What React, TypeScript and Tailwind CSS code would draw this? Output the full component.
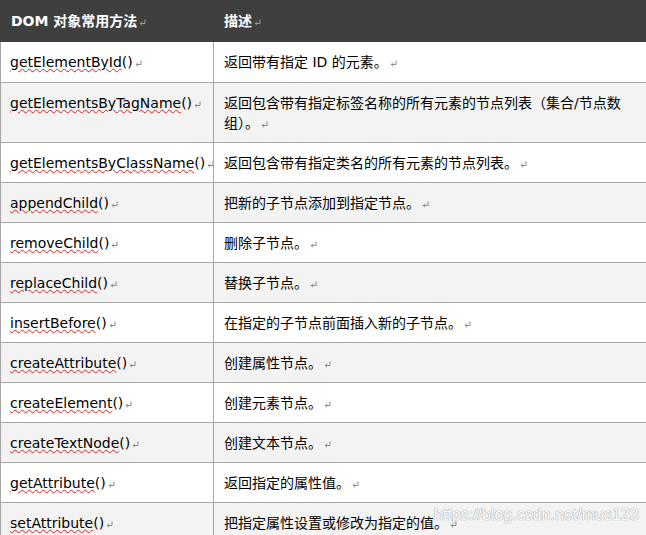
import React from "react";

const rows: [string, string][] = [
  ["getElementById", "返回带有指定 ID 的元素。"],
  ["getElementsByTagName", "返回包含带有指定标签名称的所有元素的节点列表（集合/节点数组）。"],
  ["getElementsByClassName", "返回包含带有指定类名的所有元素的节点列表。"],
  ["appendChild", "把新的子节点添加到指定节点。"],
  ["removeChild", "删除子节点。"],
  ["replaceChild", "替换子节点。"],
  ["insertBefore", "在指定的子节点前面插入新的子节点。"],
  ["createAttribute", "创建属性节点。"],
  ["createElement", "创建元素节点。"],
  ["createTextNode", "创建文本节点。"],
  ["getAttribute", "返回指定的属性值。"],
  ["setAttribute", "把指定属性设置或修改为指定的值。"],
];

function Mark({ color = "#8a8a8a" }: { color?: string }) {
  return (
    <svg
      width="7"
      height="7"
      viewBox="0 0 7 7"
      className="inline-block ml-[2px] align-baseline"
    >
      <path
        d="M6 0.5V4.5H1.2M1.2 4.5L3 2.7M1.2 4.5L3 6.3"
        stroke={color}
        strokeWidth="1"
        fill="none"
      />
    </svg>
  );
}

export default function App() {
  return (
    <div className="relative w-[646px] h-[535px] overflow-hidden bg-white font-['DejaVu_Sans','Noto_Sans_CJK_SC',sans-serif] text-[14px] leading-[20px] text-black">
      <div className="flex h-[42px] bg-[#3f3f3f] text-white font-bold items-center">
        <div className="w-[213px] shrink-0 pl-[11px] whitespace-nowrap">
          DOM 对象常用方法
          <Mark color="#9a9a9a" />
        </div>
        <div className="flex-1 pl-[11px]">
          描述
          <Mark color="#9a9a9a" />
        </div>
      </div>
      {rows.map(([name, desc], i) => (
        <div
          key={name}
          className={`flex border-b border-[#a6a6a6] ${
            i % 2 === 1 ? "bg-[#f3f3f3]" : "bg-white"
          }`}
        >
          <div
            className={`w-[213px] shrink-0 border-l border-[#a6a6a6] pl-[9px] whitespace-nowrap ${
              i === 0 ? "pt-[10px] pb-[10px]" : "pt-[10px] pb-[9px]"
            }`}
          >
            <span className="underline decoration-wavy decoration-[#e02020] decoration-1 underline-offset-[1px]">
              {name}
            </span>
            ()
            <Mark />
          </div>
          <div
            className={`w-[433px] shrink-0 border-l border-[#a6a6a6] pl-[10px] pr-[19px] ${
              i === 0 ? "pt-[10px] pb-[10px]" : "pt-[10px] pb-[9px]"
            }`}
          >
            {desc}
            <Mark />
          </div>
        </div>
      ))}
      <span className="absolute left-[434px] top-[506px] text-[16px] leading-[18px] font-['Liberation_Sans',sans-serif] text-white [text-shadow:0_0_1px_#9a9a9a,0_0_1px_#9a9a9a]">
        https://blog.csdn.net/mus123
      </span>
    </div>
  );
}
